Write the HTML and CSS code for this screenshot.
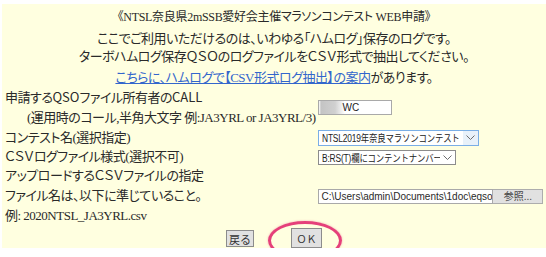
FILE: index.html
```html
<!DOCTYPE html>
<html lang="ja">
<head>
    <meta charset="UTF-8">
    <title>NTSL WEB申請</title>
    <link rel="stylesheet" href="styles.css">
</head>
<body>
    <div class="page">
        <p class="title">《NTSL奈良県2mSSB愛好会主催マラソンコンテスト WEB申請》</p>
        <p class="lead">ここでご利用いただけるのは、いわゆる「ハムログ」保存のログです。<br>ターボハムログ保存ＱＳＯのログファイルをＣＳＶ形式で抽出してください。</p>
        <p class="lead guide"><a href="#">こちらに、ハムログで【CSV形式ログ抽出】の案内</a>があります。</p>

        <table class="form">
            <tr class="call-row">
                <td class="label">申請する<span class="en">QSO</span>ファイル所有者の<span class="en">CALL</span><br><span class="indent">(運用時のコール,半角大文字 例:JA3YRL or JA3YRL/3)</span></td>
                <td><input type="text" class="call" value="WC"></td>
            </tr>
            <tr>
                <td class="label">コンテスト名(選択指定)</td>
                <td>
                    <div class="select focus">
                        <span class="value"><span>NTSL2019年奈良マラソンコンテスト</span></span>
                        <span class="arrow"><svg width="9" height="6" viewBox="0 0 9 6"><path d="M0.5 0.5L4.5 4.5L8.5 0.5" fill="none" stroke="#6d6d6d"/></svg></span>
                    </div>
                </td>
            </tr>
            <tr>
                <td class="label">ＣＳＶログファイル様式(選択不可)</td>
                <td>
                    <div class="select narrow">
                        <span class="value"><span>B:RS(T)欄にコンテントナンバー</span></span>
                        <span class="arrow"><svg width="9" height="6" viewBox="0 0 9 6"><path d="M0.5 0.5L4.5 4.5L8.5 0.5" fill="none" stroke="#6d6d6d"/></svg></span>
                    </div>
                </td>
            </tr>
            <tr class="file-row">
                <td class="label">アップロードするＣＳＶファイルの指定<br>ファイル名は、以下に準じていること。<br>例: 2020NTSL_JA3YRL.csv</td>
                <td>
                    <div class="file">
                        <span class="path">C:\Users\admin\Documents\1doc\eqso\</span>
                        <span class="browse">参照...</span>
                    </div>
                </td>
            </tr>
        </table>

        <div class="actions">
            <button class="btn">戻る</button>
            <button class="btn ok">ＯＫ</button>
            <!-- 赤丸 -->
            <span class="mark"></span>
        </div>
    </div>
</body>
</html>
```

FILE: styles.css
```css
* {
    margin: 0;
    padding: 0;
    box-sizing: border-box;
}

body {
    background: #fff;
    font-family: "Liberation Serif", "Noto Sans CJK JP", serif;
    font-size: 13px;
    letter-spacing: -0.5px;
    font-feature-settings: "palt";
    color: #2a2a2a;
    overflow: hidden;
}

.page {
    margin: 4px 0 0 2px;
    height: 244px;
    background: #ffffe0;
    padding-top: 4px;
}

.title {
    text-align: center;
    line-height: 18px;
    font-size: 12px;
    letter-spacing: -0.3px;
}

.lead {
    text-align: center;
    line-height: 18px;
    margin-top: 4px;
}

.lead.guide {
    margin-top: 3px;
}

.lead a {
    color: #3366cc;
}

.form {
    border-collapse: collapse;
}

.form td {
    padding: 0 0 0 3px;
    vertical-align: middle;
    line-height: 19px;
    white-space: nowrap;
}

.form .call-row td,
.form .file-row td {
    line-height: 20px;
}

.form td.label {
    width: 313px;
}

.en {
    font-family: "Noto Sans CJK JP", sans-serif;
    letter-spacing: 0;
}

.indent {
    padding-left: 22px;
}

input.call {
    display: block;
    width: 74px;
    height: 15px;
    border: 1px solid #a9a9a9;
    padding-left: 23px;
    font: 10px "Liberation Sans", sans-serif;
    letter-spacing: 0;
    color: #222;
    background: linear-gradient(to right, #fff 0, #c4c4c4 2px, #d0d0d0 16px, #fff 26px);
}

.select {
    display: flex;
    align-items: center;
    width: 161px;
    height: 16px;
    padding-left: 3px;
    border: 1px solid #8c8c8c;
    background: #fff;
    font: 10px "Liberation Sans", "Noto Sans CJK JP", sans-serif;
    letter-spacing: -0.2px;
    white-space: nowrap;
    color: #222;
}

.select.focus {
    border-color: #7aaee6;
}

.select.narrow {
    width: 138px;
    height: 15px;
    margin-top: 2px;
}

.select .value {
    flex: 1;
    overflow: hidden;
}

/* 文字幅を詰める */
.select .value span {
    display: inline-block;
    transform: scaleX(0.84);
    transform-origin: 0 50%;
}

.select .arrow {
    display: flex;
    align-items: center;
    justify-content: center;
    width: 15px;
    height: 100%;
    flex-shrink: 0;
}

.select.focus .arrow {
    background: #e8f1fa;
}

.file {
    display: flex;
    height: 15px;
    font: 10px "Liberation Sans", "Noto Sans CJK JP", sans-serif;
    letter-spacing: 0;
    white-space: nowrap;
}

.file .path {
    width: 175px;
    overflow: hidden;
    padding: 0 2px;
    border: 1px solid #a9a9a9;
    background: #fff;
    line-height: 13px;
}

.file .browse {
    width: 50px;
    border: 1px solid #adadad;
    border-left: none;
    background: #e1e1e1;
    text-align: center;
    line-height: 13px;
    color: #444;
}

.actions {
    position: relative;
    display: flex;
    justify-content: center;
    align-items: center;
    gap: 37px;
    margin-top: 2px;
    height: 20px;
}

.btn {
    width: 28px;
    height: 17px;
    border: 1px solid #8c8c8c;
    background: #e1e1e1;
    font: 11px "Noto Sans CJK JP", sans-serif;
    letter-spacing: 0;
    color: #333;
}

.btn.ok {
    width: 31px;
    height: 20px;
    font-size: 10px;
}

.mark {
    position: absolute;
    left: 266px;
    top: -7px;
    width: 74px;
    height: 39px;
    border: 3px solid #e5407a;
    border-radius: 50%;
    box-shadow: 0 0 2px rgba(229, 64, 122, 0.5);
}
```
